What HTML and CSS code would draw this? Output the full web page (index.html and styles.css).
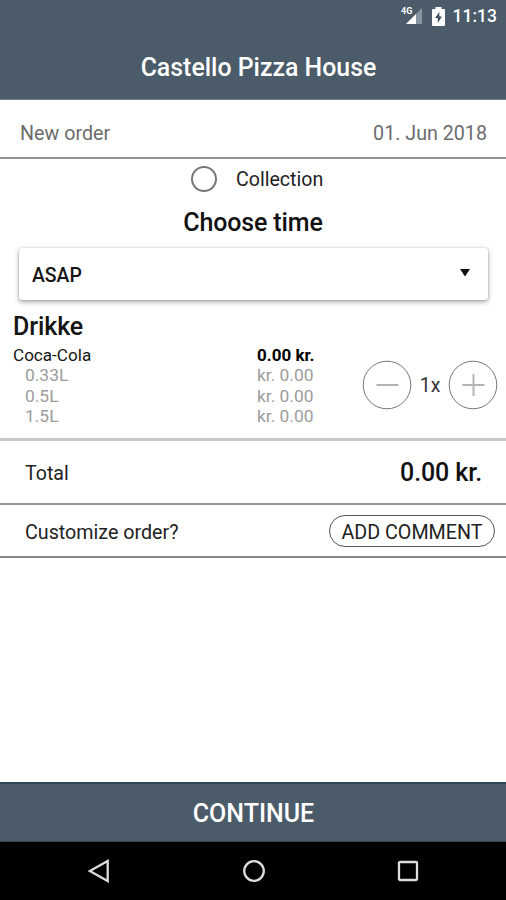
FILE: index.html
```html
<!DOCTYPE html>
<html lang="en">
<head>
<meta charset="utf-8">
<title>Castello Pizza House</title>
<link rel="stylesheet" href="styles.css">
</head>
<body>
<div class="screen">
  <header class="header">
    <div class="status">
      <svg class="signal" width="22" height="20" viewBox="0 0 22 20"><path d="M5 18 21 2v16z" fill="#8795a1"/><path d="M5 18 15 8v10z" fill="#fff"/><text x="0" y="8" class="network">4G</text></svg>
      <svg class="battery" width="13" height="19" viewBox="0 0 13 19"><path d="M3.5 2V0h6v2H12a1 1 0 0 1 1 1v15a1 1 0 0 1-1 1H1a1 1 0 0 1-1-1V3a1 1 0 0 1 1-1z" fill="#fff"/><path d="M7.3 4.8 3.2 11h2.6v5l4.1-6.5H7.3z" fill="#394b59"/></svg>
      <span class="clock">11:13</span>
    </div>
    <h1 class="title"><span class="title-text">Castello Pizza House</span></h1>
  </header>
  <div class="date-row"><span class="new-order">New order</span><span class="date">01. Jun 2018</span></div>
  <div class="collection"><span class="radio"></span><span class="collection-label">Collection</span></div>
  <h2 class="choose"><span>Choose time</span></h2>
  <div class="select"><span class="asap">ASAP</span><svg class="caret" width="10" height="8" viewBox="0 0 10 8"><path d="M0 0h10L5 7.5z" fill="#111"/></svg></div>
  <section class="product">
    <h2 class="category"><span>Drikke</span></h2>
    <div class="item">
      <div class="names"><b class="name">Coca-Cola</b><span>0.33L</span><span>0.5L</span><span>1.5L</span></div>
      <div class="prices"><b class="price">0.00 kr.</b><span>kr. 0.00</span><span>kr. 0.00</span><span>kr. 0.00</span></div>
      <div class="stepper">
        <svg width="50" height="50" viewBox="0 0 50 50"><circle cx="25" cy="25" r="23.8" class="ring"/><path d="M14.5 25h22" class="sign"/></svg>
        <span class="quantity">1x</span>
        <svg width="50" height="50" viewBox="0 0 50 50"><circle cx="25" cy="25" r="23.8" class="ring"/><path d="M14.5 25h22M25.5 14v22" class="sign"/></svg>
      </div>
    </div>
  </section>
  <div class="total-row"><span class="total">Total</span><span class="amount">0.00 kr.</span></div>
  <div class="comment-row"><span class="customize">Customize order?</span><span class="comment"><span class="comment-text">ADD COMMENT</span></span></div>
  <div class="continue"><span class="continue-text">CONTINUE</span></div>
  <nav class="nav">
    <svg width="22" height="26" viewBox="0 0 22 26"><path d="M19.7 3v20L1.8 13z"/></svg>
    <svg width="24" height="24" viewBox="0 0 24 24"><circle cx="12" cy="12" r="9.8"/></svg>
    <svg width="22" height="22" viewBox="0 0 22 22"><rect x="2" y="2" width="18" height="18" rx="1"/></svg>
  </nav>
</div>
</body>
</html>
```

FILE: styles.css
```css
* { box-sizing: border-box; }
body { margin: 0; font-family: Roboto, "Liberation Sans", sans-serif; color: #222; background: #fff; }
h1, h2 { margin: 0; font-weight: 500; }
span, b { white-space: nowrap; }
svg { display: block; flex: none; }
.screen { width: 506px; height: 900px; display: flex; flex-direction: column; overflow: hidden; }
.header { height: 100px; flex: none; background: #4b5b69; color: #fff; border-bottom: 1px solid #75818c; }
.status { height: 33px; display: flex; justify-content: flex-end; align-items: center; padding-right: 9px; }
.network { font-size: 9px; font-weight: 700; fill: #fff; }
.signal { overflow: visible; margin: -1px 9px 0 0; }
.battery { margin-right: 8px; }
.clock { font-size: 17.5px; font-weight: 500; line-height: 33px; }
.title { height: 67px; display: flex; justify-content: center; align-items: center; padding: 2px 0 0 11px; font-size: 24.9px; line-height: 30px; }
.date-row { height: 59px; flex: none; border-bottom: 2px solid #929292; display: flex; align-items: center; justify-content: space-between; padding: 10px 19px 0 20px; font-size: 19.7px; color: #6c6c6c; }
.collection { height: 41px; flex: none; display: flex; align-items: center; padding: 0 0 1px 191px; font-size: 19.6px; }
.radio { width: 26px; height: 26px; border: 2.5px solid #777; border-radius: 50%; margin-right: 19px; }
.choose { height: 44px; flex: none; text-align: center; font-size: 25px; letter-spacing: -0.15px; line-height: 46px; color: #111; }
.select { height: 52px; flex: none; margin: 4px 18px 0 19px; padding: 1px 18px 0 13px; border-radius: 3px; box-shadow: 0 2px 5px rgba(0,0,0,.35), 0 0 2px rgba(0,0,0,.2); display: flex; align-items: center; justify-content: space-between; font-size: 19.4px; font-weight: 500; color: #151515; }
.asap { padding-top: 1px; }
.caret { margin-top: -3px; }
.product { height: 141px; flex: none; border-bottom: 3px solid #c7c7c7; padding: 12px 7px 0 13px; }
.category { font-size: 25px; letter-spacing: -0.1px; line-height: 30px; color: #151515; }
.item { display: flex; height: 84px; margin-top: 3px; font-size: 17.4px; line-height: 20.3px; color: #9c9c9c; }
.names, .prices { display: flex; flex-direction: column; }
.names { width: 244px; }
.names span { padding-left: 12px; }
.name { font-weight: 400; font-size: 17.1px; color: #151515; }
.price { font-weight: 700; font-size: 17px; color: #000; }
.prices { width: 105px; }
.stepper { display: flex; align-items: center; justify-content: space-between; width: 136px; height: 50px; margin-top: 15px; color: #333; font-size: 19.5px; }
.quantity { padding-top: 2px; }
.ring { fill: none; stroke: #777; stroke-width: 1; }
.sign { fill: none; stroke: #b4b4b4; stroke-width: 2; }
.total-row { height: 64px; flex: none; border-bottom: 2px solid #999; display: flex; align-items: center; justify-content: space-between; padding: 0 24px 0 25px; font-size: 19.6px; }
.total { padding-top: 2px; }
.amount { font-size: 25px; letter-spacing: -0.12px; font-weight: 500; color: #111; }
.comment-row { height: 53px; flex: none; border-bottom: 2px solid #888; display: flex; align-items: center; justify-content: space-between; padding: 1px 11px 0 25px; font-size: 19.7px; }
.customize, .comment-text { padding-top: 2px; }
.comment { width: 166px; height: 32px; border: 1px solid #555; border-radius: 16px; display: flex; align-items: center; justify-content: center; }
.continue { height: 60px; flex: none; margin-top: auto; background: #4b5b69; border-top: 2px solid #2c4656; border-bottom: 1px solid #354350; display: flex; align-items: center; justify-content: center; padding: 1px 0 0 1px; color: #fff; font-size: 25px; font-weight: 500; }
.nav { height: 58px; flex: none; background: #000; display: grid; grid-template-columns: 22px 24px 22px; column-gap: 131.5px; padding-left: 88px; align-items: center; fill: none; stroke: #ddd; stroke-width: 2.3; }
```
